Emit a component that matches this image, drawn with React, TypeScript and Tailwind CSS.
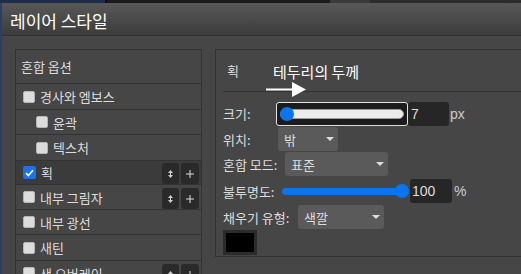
import React from "react";

function Box({ checked }: { checked?: boolean }) {
  if (checked) {
    return (
      <div className="w-[13px] h-[13px] rounded-[2px] bg-[#1a73e8] flex items-center justify-center shrink-0">
        <svg width="9" height="8" viewBox="0 0 9 8">
          <path d="M1 4.2 L3.4 6.5 L8 1.2" fill="none" stroke="#ffffff" strokeWidth="1.6" />
        </svg>
      </div>
    );
  }
  return <div className="w-[12px] h-[12px] rounded-[2px] bg-[#dcdcdc] border border-[#b5b5b5] shrink-0" />;
}

function Btns() {
  return (
    <div className="ml-auto self-end flex gap-[2px] mr-[2px]">
      <div className="w-[17px] h-[21px] rounded-[3px] bg-[#2a2a2a] flex items-center justify-center">
        <svg width="5" height="8" viewBox="0 0 5 8">
          <path d="M2.5 0 L5 3 H0 Z" fill="#cfcfcf" />
          <rect x="2" y="2" width="1" height="4" fill="#cfcfcf" />
          <path d="M0 5 H5 L2.5 8 Z" fill="#cfcfcf" />
        </svg>
      </div>
      <div className="w-[18px] h-[21px] rounded-[3px] bg-[#2a2a2a] flex items-center justify-center">
        <svg width="8" height="8" viewBox="0 0 8 8">
          <rect x="3.5" y="0" width="1" height="8" fill="#dddddd" />
          <rect x="0" y="3.5" width="8" height="1" fill="#dddddd" />
        </svg>
      </div>
    </div>
  );
}

function Row({
  label,
  h,
  indent,
  checked,
  active,
  btns,
}: {
  label: string;
  h: string;
  indent?: boolean;
  checked?: boolean;
  active?: boolean;
  btns?: boolean;
}) {
  return (
    <div
      className={`${h} border-b border-[#333333] flex items-center shrink-0 ${active ? "bg-[#3b3b3b]" : ""}`}
    >
      <div className={`flex items-center gap-[5px] ${indent ? "ml-[20px]" : "ml-[7px]"}`}>
        <Box checked={checked} />
        <span className="text-[13px] leading-none text-[#dddddd] whitespace-nowrap">{label}</span>
      </div>
      {btns ? <Btns /> : null}
    </div>
  );
}

function Caret() {
  return (
    <svg width="8" height="4" viewBox="0 0 8 4">
      <path d="M0 0 H8 L4 4 Z" fill="#dddddd" />
    </svg>
  );
}

function Select({ w, text }: { w: string; text: string }) {
  return (
    <div className={`${w} h-[24px] rounded-[3px] bg-[#5a5a5a] flex items-center justify-between pl-[6px] pr-[4px]`}>
      <span className="text-[13px] leading-none text-[#dddddd]">{text}</span>
      <Caret />
    </div>
  );
}

export default function App() {
  return (
    <div className="w-[521px] h-[274px] overflow-hidden flex flex-col bg-[#464646] font-['Noto_Sans_CJK_KR',sans-serif] relative">
      <div className="h-[3px] flex shrink-0">
        <div className="w-[105px] bg-[#1f2d4a]" />
        <div className="w-[2px] bg-[#111111]" />
        <div className="w-[223px] bg-[#1b1b1b]" />
        <div className="w-[40px] bg-[#3a3a3a]" />
        <div className="flex-1 bg-[#2b2b2b]" />
      </div>
      <div className="flex flex-1 min-h-0">
        <div className="w-[2px] bg-[#2b3e66] shrink-0" />
        <div className="flex-1 flex flex-col min-w-0">
          <div className="h-[33px] shrink-0 bg-gradient-to-b from-[#585858] to-[#3c3c3c] border-b border-[#303030] flex items-center pl-[8px] pt-[2px]">
            <span className="text-white text-[17px] leading-none">레이어 스타일</span>
          </div>
          <div className="flex-1 flex pt-[13px] pl-[13px] gap-[13px] min-h-0">
            {/* left list */}
            <div className="w-[187px] shrink-0 border-l border-r border-t border-[#333333] flex flex-col">
              <div className="h-[34px] border-b border-[#333333] flex items-center pl-[5px] shrink-0">
                <span className="text-[13px] leading-none text-[#dddddd]">혼합 옵션</span>
              </div>
              <Row label="경사와 엠보스" h="h-[26px]" />
              <Row label="윤곽" h="h-[25px]" indent />
              <Row label="텍스처" h="h-[26px]" indent />
              <Row label="획" h="h-[24px]" checked active btns />
              <Row label="내부 그림자" h="h-[25px]" btns />
              <Row label="내부 광선" h="h-[25px]" />
              <Row label="새틴" h="h-[26px]" />
              <Row label="색 오버레이" h="h-[25px]" btns />
            </div>
            {/* right panel */}
            <div className="flex-1 h-[208px] border-l border-t border-b border-[#333333] flex flex-col">
              <div className="ml-[7px] h-[42px] border-b border-[#333333] flex items-center pl-[4px] shrink-0">
                <span className="text-[13px] leading-none text-[#dddddd]">획</span>
              </div>
              <div className="pl-[7px] pt-[9px] flex flex-col">
                {/* size */}
                <div className="h-[25px] flex items-center">
                  <span className="w-[53px] text-[13px] leading-none text-[#dddddd]">크기:</span>
                  <div className="w-[132px] h-[24px] mt-[1px] border border-[#e2e2e2] rounded-[3px] bg-[#1c1c1c] flex items-center px-[3px]">
                    <div className="relative flex-1 h-[10px] rounded-full bg-[#ececec] border border-[#9a9a9a]">
                      <div className="absolute left-[-1px] top-1/2 -translate-y-1/2 w-[14px] h-[14px] rounded-full bg-[#0b74f0]" />
                    </div>
                  </div>
                  <div className="w-[41px] h-[24px] rounded-[3px] bg-[#262626] flex items-center pl-[3px]">
                    <span className="font-['Liberation_Sans',sans-serif] text-[14px] leading-none text-[#dddddd]">7</span>
                  </div>
                  <span className="ml-[1px] font-['Liberation_Sans',sans-serif] text-[14px] leading-none text-[#cccccc]">px</span>
                </div>
                {/* position */}
                <div className="h-[24px] mt-[1px] flex items-center">
                  <span className="w-[55px] text-[13px] leading-none text-[#dddddd]">위치:</span>
                  <Select w="w-[60px]" text="밖" />
                </div>
                {/* blend */}
                <div className="h-[24px] mt-[1px] flex items-center">
                  <span className="w-[62px] text-[13px] leading-none text-[#dddddd] whitespace-nowrap">혼합 모드:</span>
                  <Select w="w-[103px]" text="표준" />
                </div>
                {/* opacity */}
                <div className="h-[24px] mt-[3px] flex items-center">
                  <span className="w-[59px] text-[13px] leading-none text-[#dddddd] whitespace-nowrap">불투명도:</span>
                  <div className="relative w-[127px] h-[14px] flex items-center">
                    <div className="w-full h-[7px] rounded-full bg-[#0b74f0]" />
                    <div className="absolute right-0 top-0 w-[14px] h-[14px] rounded-full bg-[#0b74f0]" />
                  </div>
                  <div className="ml-[1px] w-[42px] h-[24px] rounded-[3px] bg-[#262626] flex items-center pl-[2px]">
                    <span className="font-['Liberation_Sans',sans-serif] text-[14px] leading-none text-[#dddddd]">100</span>
                  </div>
                  <span className="ml-[2px] font-['Liberation_Sans',sans-serif] text-[14px] leading-none text-[#cccccc]">%</span>
                </div>
                {/* fill type */}
                <div className="h-[24px] mt-[2px] flex items-center">
                  <span className="w-[75px] text-[13px] leading-none text-[#dddddd] whitespace-nowrap">채우기 유형:</span>
                  <Select w="w-[86px]" text="색깔" />
                </div>
                <div className="mt-[1px] w-[34px] h-[25px] border-[3px] border-[#2b2b2b] bg-black" />
              </div>
            </div>
          </div>
        </div>
      </div>
      {/* annotation */}
      <div className="absolute left-[273px] top-[64px] text-white text-[15px] leading-none whitespace-nowrap">테두리의 두께</div>
      <svg className="absolute left-[266px] top-[82px]" width="40" height="15" viewBox="0 0 40 15">
        <rect x="0" y="6.5" width="27" height="2" fill="#ffffff" />
        <path d="M26 0 L40 7.5 L26 15 Z" fill="#ffffff" />
      </svg>
    </div>
  );
}
